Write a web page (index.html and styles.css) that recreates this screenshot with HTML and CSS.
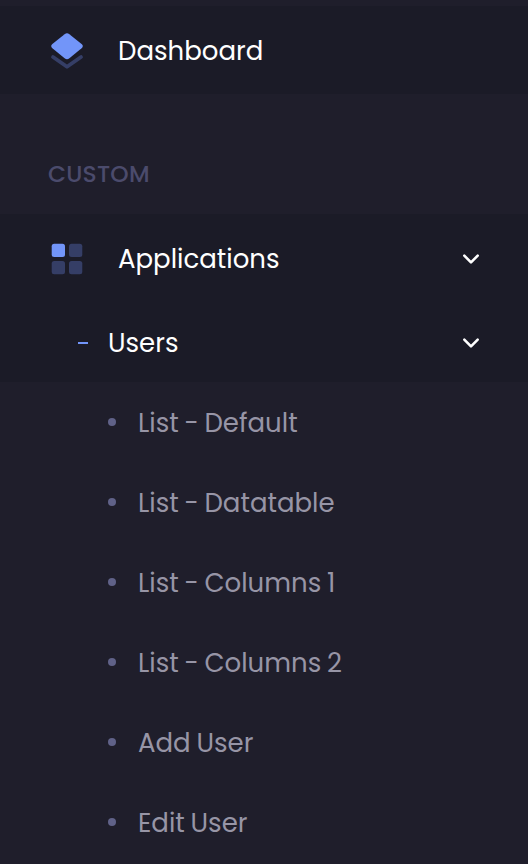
FILE: index.html
```html
<!DOCTYPE html>
<html lang="en">
<head>
<meta charset="utf-8">
<title>Dashboard</title>
<link rel="stylesheet" href="styles.css">
</head>
<body>
<nav class="menu">
  <a class="item dashboard">
    <svg class="icon" viewBox="0 0 36 40" width="36" height="40">
      <path class="soft-line" d="M4 27L18 36.7L32 27"/>
      <path class="bright" d="M15.6 4.3Q18 2.4 20.4 4.3L32.6 14Q35 16.1 32.6 18.2L20.4 28.2Q18 30.1 15.6 28.2L3.4 18.2Q1 16.1 3.4 14Z"/>
    </svg>
    <span class="label">Dashboard</span>
  </a>
  <h4 class="section">CUSTOM</h4>
  <div class="group">
    <a class="item apps">
      <svg class="icon" viewBox="0 0 36 40" width="36" height="40">
        <rect class="bright" x="2.7" y="4.7" width="13.3" height="13.3" rx="2.5"/>
        <rect class="soft" x="20" y="4.7" width="13.3" height="13.3" rx="2.5"/>
        <rect class="soft" x="2.7" y="22" width="13.3" height="13.3" rx="2.5"/>
        <rect class="soft" x="20" y="22" width="13.3" height="13.3" rx="2.5"/>
      </svg>
      <span class="label">Applications</span>
      <svg class="arrow" viewBox="0 0 18 12" width="18" height="12"><path d="M2.3 2.6L9 9.4L15.7 2.6"/></svg>
    </a>
    <a class="item users">
      <span class="dash"></span>
      <span class="label">Users</span>
      <svg class="arrow" viewBox="0 0 18 12" width="18" height="12"><path d="M2.3 2.6L9 9.4L15.7 2.6"/></svg>
    </a>
  </div>
  <ul class="sub">
    <li><span class="label">List - Default</span></li>
    <li><span class="label">List - Datatable</span></li>
    <li><span class="label">List - Columns 1</span></li>
    <li><span class="label">List - Columns 2</span></li>
    <li><span class="label">Add User</span></li>
    <li><span class="label">Edit User</span></li>
  </ul>
</nav>
</body>
</html>
```
FILE: styles.css
```css
* { box-sizing: border-box; }
body {
  margin: 0;
  background: #1f1e2b;
  font-family: Poppins, Inter, "Liberation Sans", sans-serif;
  font-size: 26px;
  font-weight: 400;
  word-spacing: -1.2px;
  color: #fff;
}
.menu { height: 864px; padding-top: 6px; overflow: hidden; }
.item { display: flex; align-items: center; padding: 0 48px 0 49px; }
.dashboard { height: 88px; background: #1b1b27; }
.icon { margin-right: 33px; flex: none; }
.label { white-space: nowrap; line-height: 40px; }
.dashboard .label, .sub .label { padding-top: 2px; }
.bright { fill: #7295f9; }
.soft { fill: #353e66; }
.soft-line { fill: none; stroke: #353e66; stroke-width: 3.8; stroke-linecap: round; stroke-linejoin: round; }
.section {
  margin: 0;
  height: 120px;
  padding: 60px 48px 0;
  font-size: 23.4px;
  line-height: 40px;
  font-weight: 500;
  letter-spacing: 0.2px;
  color: #4b4b6c;
}
.group { height: 168px; background: #1b1b27; }
.apps { height: 90px; }
.users { height: 78px; padding-left: 78px; }
.dash { width: 10px; height: 2px; margin-right: 20px; background: #7295f9; }
.arrow { margin-left: auto; fill: none; stroke: #fff; stroke-width: 2.6; stroke-linecap: round; stroke-linejoin: round; }
.sub { margin: 0; padding: 0; list-style: none; color: #9795a6; }
.sub li { display: flex; align-items: center; height: 80px; padding-left: 108px; }
.sub li::before { content: ""; width: 8px; height: 8px; margin-right: 22px; border-radius: 50%; background: #606288; }
```
